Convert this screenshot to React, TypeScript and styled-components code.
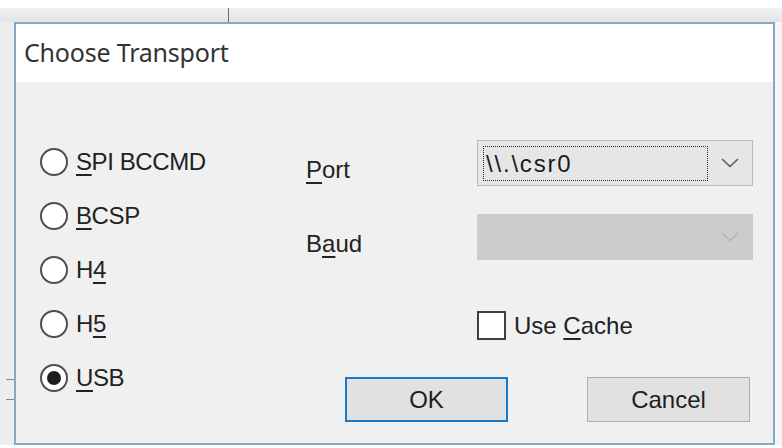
import React from "react";
import styled, { createGlobalStyle } from "styled-components";

const GlobalStyle = createGlobalStyle`
  html, body {
    margin: 0;
    padding: 0;
    background: #ffffff;
  }
  body {
    font-family: "Liberation Sans", Arial, sans-serif;
  }
`;

const transports = [
  { key: "S", rest: "PI BCCMD", before: "" },
  { key: "B", rest: "CSP", before: "" },
  { key: "4", rest: "", before: "H" },
  { key: "5", rest: "", before: "H" },
  { key: "U", rest: "SB", before: "" },
];

const Chevron: React.FC<{ color: string }> = ({ color }) => (
  <svg width="18" height="10" viewBox="0 0 18 10">
    <polyline
      points="1,1 9,8.5 17,1"
      fill="none"
      stroke={color}
      strokeWidth="1.6"
    />
  </svg>
);

const App: React.FC = () => {
  const selected = 4;
  return (
    <>
      <GlobalStyle />
      <Desktop>
        <TopStrip>
          <GrayBand>
            <VLine />
          </GrayBand>
        </TopStrip>
        <Middle>
          <LeftStrip>
            <Tick />
            <Tick second />
          </LeftStrip>
          <Dialog>
            <TitleBar>Choose Transport</TitleBar>
            <Body>
              <RadioColumn>
                {transports.map((t, i) => (
                  <RadioItem key={i}>
                    <RadioCircle checked={i === selected} />
                    <span>
                      {t.before}
                      <Key>{t.key}</Key>
                      {t.rest}
                    </span>
                  </RadioItem>
                ))}
              </RadioColumn>
              <FormColumn>
                <FieldRow>
                  <Label>
                    <Key>P</Key>ort
                  </Label>
                  <Combo>
                    <FocusBox>\\.\csr0</FocusBox>
                    <ArrowArea>
                      <Chevron color="#5a5a5a" />
                    </ArrowArea>
                  </Combo>
                </FieldRow>
                <FieldRow second>
                  <Label>
                    B<Key>a</Key>ud
                  </Label>
                  <Combo disabled>
                    <Spacer />
                    <ArrowArea>
                      <Chevron color="#b4b4b4" />
                    </ArrowArea>
                  </Combo>
                </FieldRow>
                <CheckRow>
                  <CheckBox />
                  <span>
                    Use <Key>C</Key>ache
                  </span>
                </CheckRow>
                <ButtonRow>
                  <Button primary>OK</Button>
                  <Button>Cancel</Button>
                </ButtonRow>
              </FormColumn>
            </Body>
          </Dialog>
          <RightStrip />
        </Middle>
        <BottomStrip />
      </Desktop>
    </>
  );
};

export default App;

const Desktop = styled.div`
  width: 782px;
  height: 448px;
  overflow: hidden;
  display: flex;
  flex-direction: column;
  background: #ffffff;
`;

const TopStrip = styled.div`
  height: 22px;
  padding-top: 8px;
  box-sizing: border-box;
  display: flex;
  flex-direction: column;
`;

const GrayBand = styled.div`
  flex: 1;
  display: flex;
  padding-left: 228px;
  background: linear-gradient(#f2f2f2, #e4e4e4);
`;

const VLine = styled.div`
  width: 1px;
  background: #6a6a6a;
`;

const Middle = styled.div`
  height: 423px;
  display: flex;
`;

const LeftStrip = styled.div`
  width: 14px;
  background: #ededed;
  display: flex;
  flex-direction: column;
  padding-top: 357px;
  box-sizing: border-box;
`;

const Tick = styled.div<{ second?: boolean }>`
  height: 1px;
  width: 8px;
  margin-left: 6px;
  margin-top: ${({ second }) => (second ? "19px" : "0")};
  background: #8a8a8a;
`;

const RightStrip = styled.div`
  flex: 1;
  background: #f6f6f6;
`;

const BottomStrip = styled.div`
  flex: 1;
  background: #ffffff;
`;

const Dialog = styled.div`
  width: 761px;
  box-sizing: border-box;
  border: 2px solid #86a9c9;
  display: flex;
  flex-direction: column;
`;

const TitleBar = styled.div`
  height: 58px;
  background: #ffffff;
  display: flex;
  align-items: center;
  padding-left: 8px;
  padding-bottom: 2px;
  box-sizing: border-box;
  font-family: "Noto Sans", "Liberation Sans", sans-serif;
  font-size: 25px;
  letter-spacing: -0.2px;
  color: #333333;
`;

const Body = styled.div`
  flex: 1;
  display: flex;
  background: #f0f0f0;
  color: #222222;
  font-size: 24px;
`;

const RadioColumn = styled.div`
  width: 290px;
  box-sizing: border-box;
  padding: 53px 0 0 24px;
  display: flex;
  flex-direction: column;
`;

const RadioItem = styled.div`
  height: 54px;
  display: flex;
  align-items: center;
  gap: 8px;
  letter-spacing: -0.4px;
`;

const RadioCircle = styled.div<{ checked?: boolean }>`
  width: 28px;
  height: 28px;
  box-sizing: border-box;
  border-radius: 50%;
  border: 2px solid #4e4e4e;
  background: #ffffff;
  display: flex;
  align-items: center;
  justify-content: center;
  &::after {
    content: "";
    width: 14px;
    height: 14px;
    border-radius: 50%;
    background: #1e1e1e;
    display: ${({ checked }) => (checked ? "block" : "none")};
  }
`;

const Key = styled.span`
  text-decoration: underline;
  text-decoration-thickness: 2px;
  text-underline-offset: 4px;
`;

const FormColumn = styled.div`
  display: flex;
  flex-direction: column;
  padding-top: 58px;
`;

const FieldRow = styled.div<{ second?: boolean }>`
  display: flex;
  align-items: center;
  height: 46px;
  margin-top: ${({ second }) => (second ? "28px" : "0")};
`;

const Label = styled.div`
  width: 171px;
  padding-top: 14px;
`;

const Combo = styled.div<{ disabled?: boolean }>`
  width: 276px;
  height: 100%;
  box-sizing: border-box;
  display: flex;
  border: 1px solid ${({ disabled }) => (disabled ? "#cccccc" : "#b9b9b9")};
  background: ${({ disabled }) => (disabled ? "#cccccc" : "#e6e6e6")};
`;

const FocusBox = styled.div`
  flex: 1;
  margin: 5px 0 4px 5px;
  border: 1px dotted #2a2a2a;
  display: flex;
  align-items: center;
  padding-left: 2px;
  font-size: 24px;
  letter-spacing: 1.8px;
  color: #1a1a1a;
`;

const Spacer = styled.div`
  flex: 1;
`;

const ArrowArea = styled.div`
  width: 44px;
  display: flex;
  align-items: center;
  justify-content: center;
`;

const CheckRow = styled.div`
  display: flex;
  align-items: center;
  gap: 8px;
  margin-top: 51px;
  padding-left: 171px;
  height: 29px;
`;

const CheckBox = styled.div`
  width: 29px;
  height: 29px;
  box-sizing: border-box;
  border: 2px solid #404040;
  background: #ffffff;
`;

const ButtonRow = styled.div`
  display: flex;
  gap: 79px;
  margin-top: 37px;
  padding-left: 39px;
`;

const Button = styled.div<{ primary?: boolean }>`
  width: 163px;
  height: 45px;
  box-sizing: border-box;
  display: flex;
  align-items: center;
  justify-content: center;
  background: #e1e1e1;
  border: ${({ primary }) =>
    primary ? "2px solid #1a78c8" : "1px solid #adadad"};
  color: #1e1e1e;
  font-size: 24px;
`;
